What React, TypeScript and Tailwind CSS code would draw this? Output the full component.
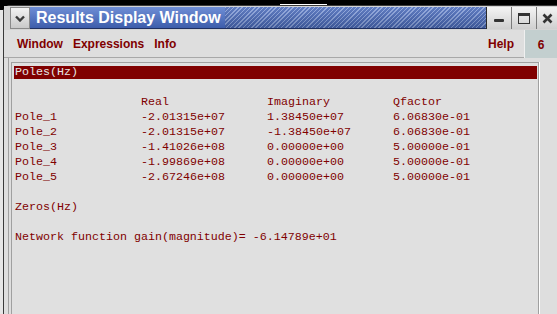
import React from "react";

const rows: string[][] = [
  ["Pole_1", "-2.01315e+07", "1.38450e+07", "6.06830e-01"],
  ["Pole_2", "-2.01315e+07", "-1.38450e+07", "6.06830e-01"],
  ["Pole_3", "-1.41026e+08", "0.00000e+00", "5.00000e-01"],
  ["Pole_4", "-1.99869e+08", "0.00000e+00", "5.00000e-01"],
  ["Pole_5", "-2.67246e+08", "0.00000e+00", "5.00000e-01"],
];

function Row({ cells }: { cells: string[] }) {
  return (
    <div className="grid grid-cols-[126px_126px_126px_auto] h-[15px] leading-[15px] pl-[1px] whitespace-pre">
      {cells.map((c, i) => (
        <span key={i}>{c}</span>
      ))}
    </div>
  );
}

export default function App() {
  return (
    <div className="w-[557px] h-[314px] bg-black flex flex-col overflow-hidden font-['Liberation_Sans',Arial,sans-serif]">
      {/* top strip behind window */}
      <div className="h-[5px] flex shrink-0">
        <div className="w-[280px]" />
        <div className="w-[47px] h-[1px] mt-[4px] bg-white" />
      </div>
      <div className="flex-1 flex min-h-0">
        {/* sliver of what lies behind */}
        <div className="w-[3px] bg-[#e6e6e6] mt-[5px]" />
        {/* window */}
        <div className="flex-1 flex flex-col bg-[#dcdcdc] border-l border-t border-[#3a3a3a] rounded-tl-[7px] min-h-0">
          {/* title bar */}
          <div className="h-[24px] flex pt-[1px] pb-[1px] shrink-0 bg-[#d4d4d4]">
            <div className="w-[6px]" />
            <div className="w-[20px] h-[22px] flex items-center justify-center bg-[linear-gradient(to_bottom,#f2f2f2,#c9c9c9)] border border-[#8a8a8a]">
              <svg width="10" height="7" viewBox="0 0 10 7">
                <path d="M1 1.5 L5 5.5 L9 1.5" stroke="#3a3a3a" strokeWidth="2.4" fill="none" />
              </svg>
            </div>
            <div className="w-[456px] h-[22px] flex border-b border-[#1f2f60] bg-[#4a6ab8]">
              <div className="h-full flex items-center pl-[6px] pr-[4px] bg-[linear-gradient(to_bottom,#6f8ed6,#3d5dab)]">
                <span className="text-white font-bold text-[16px] leading-none whitespace-nowrap">
                  Results Display Window
                </span>
              </div>
              <div className="flex-1 h-full bg-[linear-gradient(to_bottom,rgba(255,255,255,0.12),rgba(0,0,0,0.18)),repeating-linear-gradient(135deg,#8aa3de_0px,#8aa3de_1px,#4b6bba_1px,#4b6bba_3px)]" />
            </div>
            <div className="w-[1px] bg-[#2a2a2a]" />
            {/* minimize */}
            <div className="w-[25px] h-[22px] flex items-end justify-center pb-[7px] bg-[linear-gradient(to_bottom,#f4f4f4,#cfcfcf)] border-r border-[#7a7a7a]">
              <div className="w-[10px] h-[3px] bg-[#333] rounded-[1px]" />
            </div>
            {/* maximize */}
            <div className="w-[25px] h-[22px] flex items-center justify-center bg-[linear-gradient(to_bottom,#f4f4f4,#cfcfcf)] border-r border-[#7a7a7a]">
              <div className="w-[12px] h-[11px] border border-[#333] border-t-[3px]" />
            </div>
            {/* close */}
            <div className="flex-1 h-[22px] flex items-center justify-center bg-[linear-gradient(to_bottom,#f4f4f4,#cfcfcf)]">
              <svg width="11" height="11" viewBox="0 0 11 11">
                <path d="M1.5 1.5 L9.5 9.5 M9.5 1.5 L1.5 9.5" stroke="#333" strokeWidth="2.6" />
              </svg>
            </div>
          </div>
          {/* menu bar */}
          <div className="h-[28px] flex shrink-0 bg-[#dedede]">
            <div className="flex-1 flex items-center border-b border-[#a8a8a8] text-[12px] font-bold text-[#800000]">
              <span className="ml-[13px]">Window</span>
              <span className="ml-[10px]">Expressions</span>
              <span className="ml-[10px]">Info</span>
              <span className="ml-auto mr-[10px]">Help</span>
            </div>
            <div className="w-[33px] h-[29px] flex items-center justify-center bg-[#c3cfcf] border-l border-[#f0f0f0] text-[12px] font-bold text-[#800000]">
              6
            </div>
          </div>
          {/* body */}
          <div className="flex-1 flex min-h-0 bg-[#dedede]">
            <div className="w-[4px]" />
            <div className="flex-1 flex border-l border-[#a0a0a0] pl-[2px] pt-[4px]">
              <div className="flex-1 border-r border-white">
                <div className="h-full border-l border-t border-r border-[#a0a0a0] bg-[#e0e0e0] pl-[2px] pr-[1px] pt-[2px] font-['Liberation_Mono',monospace] text-[11.67px] text-[#800000]">
                  <div className="h-[15px] py-[1px]">
                    <div className="h-[13px] leading-[13px] bg-[#800000] text-[#e6e6e6] pl-[1px] whitespace-pre">
                      Poles(Hz)
                    </div>
                  </div>
                  <div className="h-[15px]" />
                  <Row cells={["", "Real", "Imaginary", "Qfactor"]} />
                  {rows.map((r) => (
                    <Row key={r[0]} cells={r} />
                  ))}
                  <div className="h-[15px]" />
                  <div className="h-[15px] leading-[15px] pl-[1px] whitespace-pre">Zeros(Hz)</div>
                  <div className="h-[15px]" />
                  <div className="h-[15px] leading-[15px] pl-[1px] whitespace-pre">
                    Network function gain(magnitude)= -6.14789e+01
                  </div>
                </div>
              </div>
              <div className="w-[17px]" />
            </div>
          </div>
        </div>
      </div>
    </div>
  );
}
